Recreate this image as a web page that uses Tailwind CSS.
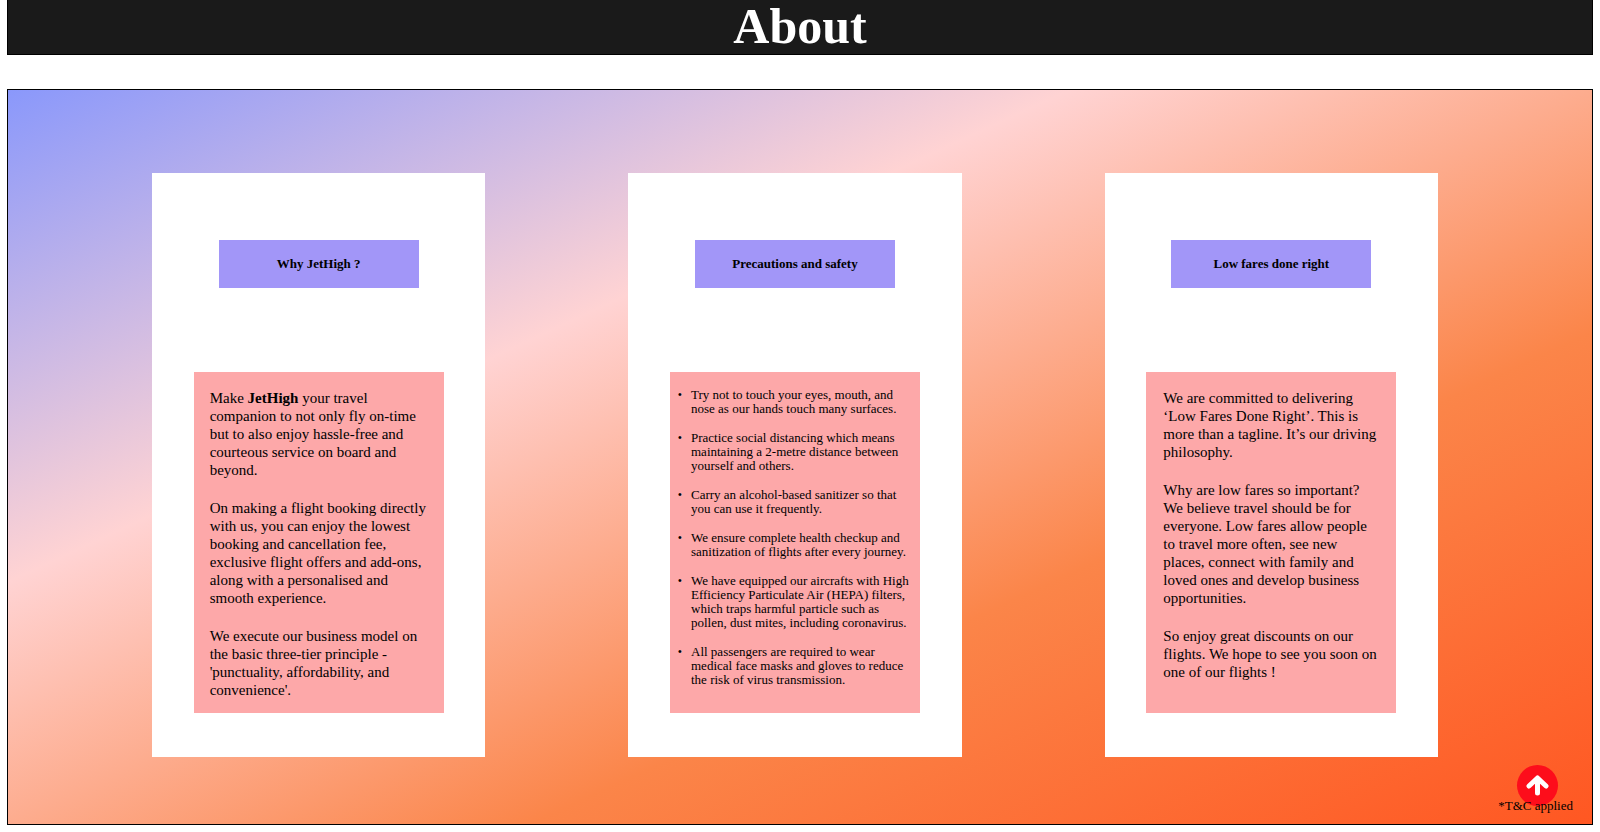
<!DOCTYPE html>
<html lang="en">
<head>
<meta charset="utf-8">
<meta name="viewport" content="width=device-width, initial-scale=1">
<title>About JetHigh</title>
<script src="https://cdn.jsdelivr.net/npm/@tailwindcss/browser@4"></script>
</head>
<body class="bg-white px-[7px] font-['Liberation_Serif','Times_New_Roman',serif] text-black">
<header class="border border-t-0 border-black bg-[#1a1a1a] pt-px pb-[3px] text-center">
  <h1 class="text-[50px] leading-[50px] font-bold text-white">About</h1>
</header>
<main class="relative mt-[34px] border border-black bg-[linear-gradient(to_bottom_right,#8a98fb_0%,#ffd3d3_33.5%,#fb8549_66.5%,#ff5722_100%)] pt-[83px] pr-[154px] pb-[67px] pl-[144px]">
  <div class="grid grid-cols-3 gap-[143px]">
    <section class="flex flex-col items-center bg-white pt-[67px] pb-11">
      <h2 class="w-3/5 bg-[#a296f8] text-center text-[13px] leading-[48px] font-bold">Why JetHigh ?</h2>
      <div class="mt-[84px] w-3/4 grow space-y-5 bg-[#fda8a9] pt-[17px] pr-[14px] pb-[14px] pl-4 text-[15px] leading-[18px]">
        <p>Make <b>JetHigh</b> your travel companion to not only fly on-time but to also enjoy hassle-free and courteous service on board and beyond.</p>
        <p>On making a flight booking directly with us, you can enjoy the lowest booking and cancellation fee, exclusive flight offers and add-ons, along with a personalised and smooth experience.</p>
        <p>We execute our business model on the basic three-tier principle - 'punctuality, affordability, and convenience'.</p>
      </div>
    </section>
    <section class="flex flex-col items-center bg-white pt-[67px] pb-11">
      <h2 class="w-3/5 bg-[#a296f8] text-center text-[13px] leading-[48px] font-bold">Precautions and safety</h2>
      <div class="mt-[84px] w-3/4 grow bg-[#fda8a9] pt-4 pr-2 pb-[14px] pl-[21px] text-[13px] leading-[14px]">
        <ul class="list-['•___'] space-y-[15px] marker:text-[12px]">
          <li>Try not to touch your eyes, mouth, and nose as our hands touch many surfaces.</li>
          <li>Practice social distancing which means maintaining a 2-metre distance between yourself and others.</li>
          <li>Carry an alcohol-based sanitizer so that you can use it frequently.</li>
          <li>We ensure complete health checkup and sanitization of flights after every journey.</li>
          <li>We have equipped our aircrafts with High Efficiency Particulate Air (HEPA) filters, which traps harmful particle such as pollen, dust mites, including coronavirus.</li>
          <li>All passengers are required to wear medical face masks and gloves to reduce the risk of virus transmission.</li>
        </ul>
      </div>
    </section>
    <section class="flex flex-col items-center bg-white pt-[67px] pb-11">
      <h2 class="w-3/5 bg-[#a296f8] text-center text-[13px] leading-[48px] font-bold">Low fares done right</h2>
      <div class="mt-[84px] w-3/4 grow space-y-5 bg-[#fda8a9] px-[17px] pt-[17px] pb-[14px] text-[15px] leading-[18px]">
        <p>We are committed to delivering ‘Low Fares Done Right’. This is more than a tagline. It’s our driving philosophy.</p>
        <p>Why are low fares so important? We believe travel should be for everyone. Low fares allow people to travel more often, see new places, connect with family and loved ones and develop business opportunities.</p>
        <p>So enjoy great discounts on our flights. We hope to see you soon on one of our flights !</p>
      </div>
    </section>
  </div>
  <a href="#" aria-label="Back to top" class="absolute right-[34px] bottom-[18px] flex size-[41px] items-center justify-center rounded-full bg-[#fd0d1b]">
    <svg class="size-[23px]" viewBox="0 0 23 23" fill="none" stroke="#fff" stroke-width="5" stroke-linecap="round" stroke-linejoin="round" aria-hidden="true"><path d="M11.500 19V5M3 12l8.500-8L20 12"/><path fill="#fff" stroke="none" d="M6 10h11l-5.500-6z"/></svg>
  </a>
  <p class="absolute right-[19px] bottom-[10px] text-[13px] leading-4">*T&amp;C applied</p>
</main>
</body>
</html>
